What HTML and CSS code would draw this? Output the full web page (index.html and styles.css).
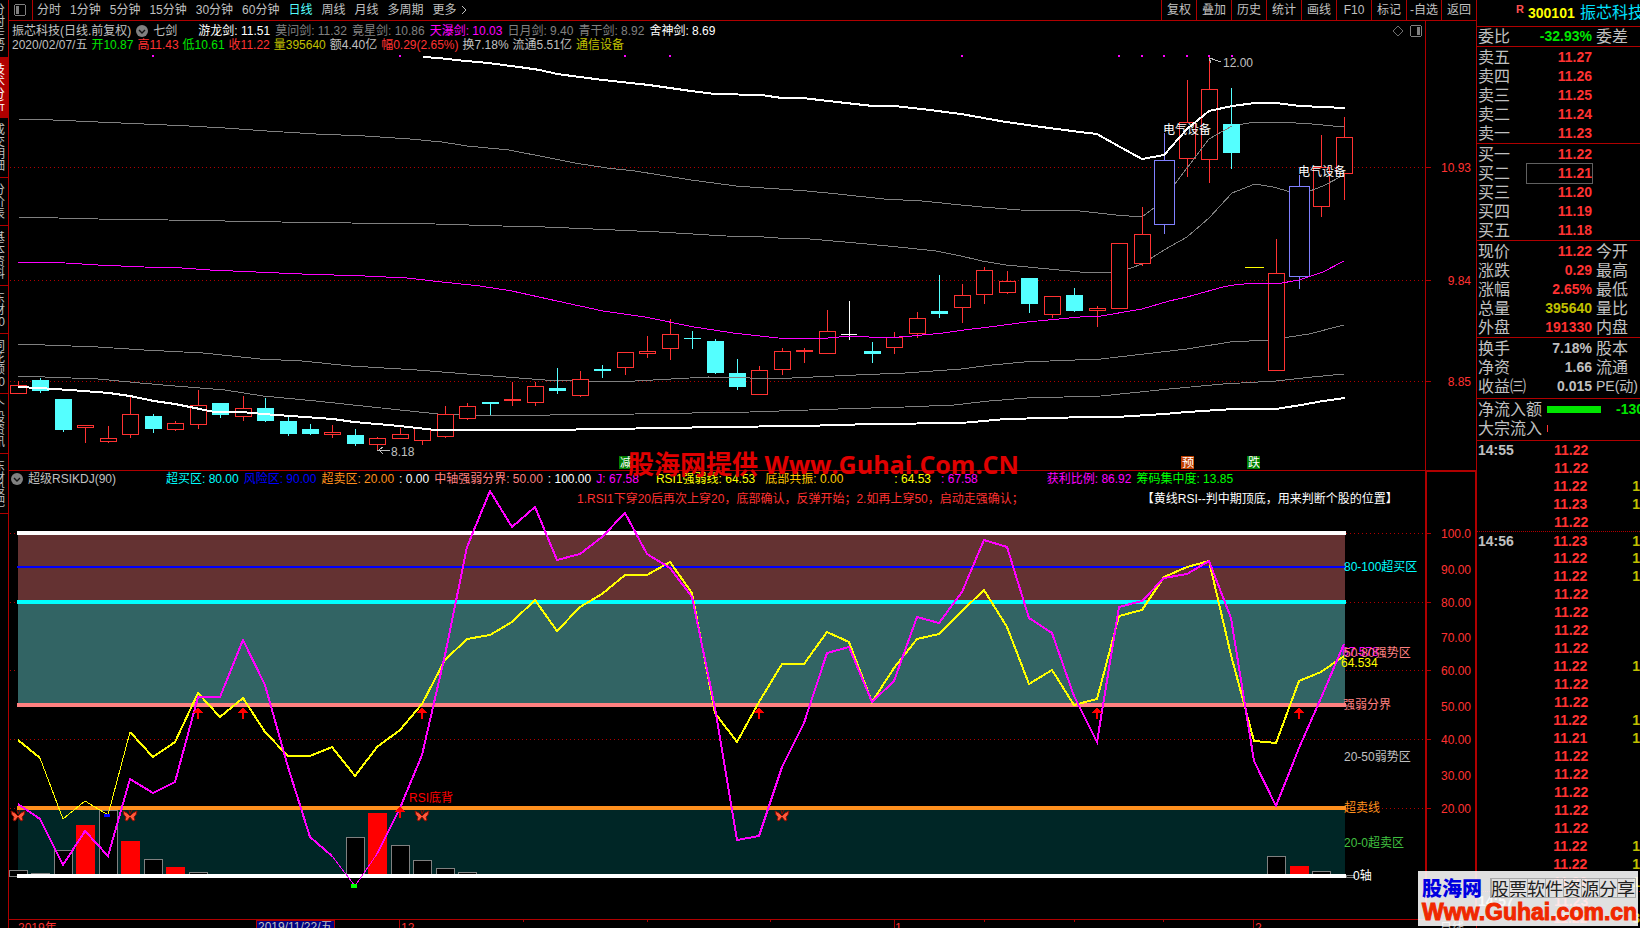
FILE: index.html
```html
<!DOCTYPE html>
<html lang="zh-CN">
<head>
<meta charset="utf-8">
<title>振芯科技 300101</title>
<link rel="stylesheet" href="styles.css">
</head>
<body>
<nav class="side">
  <button class="tab first">分时走势</button>
  <button class="tab active">技术分析</button>
  <button class="tab">成交明细</button>
  <button class="tab">分价表</button>
  <button class="tab">基本资料</button>
  <button class="tab">东财10</button>
  <button class="tab">同花顺10</button>
  <button class="tab">个股资讯</button>
  <button class="tab">东财股吧</button>
</nav>

<main class="main">
  <header class="toolbar">
    <button class="toggle" aria-label="侧栏">
      <svg width="12" height="12" viewBox="0 0 12 12" class="crisp"><rect x="0.5" y="0.5" width="11" height="11" rx="2" fill="none" stroke="#808080"/><rect x="2" y="2" width="3" height="8" fill="#808080"/></svg>
    </button>
    <div class="periods">
      <button>分时</button><button>1分钟</button><button>5分钟</button><button>15分钟</button><button>30分钟</button><button>60分钟</button><button class="on">日线</button><button>周线</button><button>月线</button><button>多周期</button><button class="more">更多<svg width="6" height="10" viewBox="0 0 6 10"><path d="M1 1l4 4-4 4" fill="none" stroke="#c0c0c0"/></svg></button>
    </div>
    <div class="tools">
      <button>复权</button><button>叠加</button><button>历史</button><button>统计</button><button>画线</button><button>F10</button><button>标记</button><button>-自选</button><button>返回</button>
    </div>
  </header>

  <section class="pane">
    <svg id="price" class="plot" viewBox="9 21 1467 449"></svg>
    <div class="info">
      <div class="row gap5">
        <span>振芯科技(日线.前复权)</span>
        <svg class="drop" width="12" height="12" viewBox="0 0 12 12"><circle cx="6" cy="6" r="6" fill="#808080"/><path d="M3 5l3 3 3-3" fill="none" stroke="#111" stroke-width="1.4"/></svg>
        <span>七剑</span>
        <span class="white lead">游龙剑: 11.51</span>
        <span class="dim">莫问剑: 11.32</span>
        <span class="dim">竟星剑: 10.86</span>
        <span class="mag">天瀑剑: 10.03</span>
        <span class="dim">日月剑: 9.40</span>
        <span class="dim">青干剑: 8.92</span>
        <span class="white">舍神剑: 8.69</span>
        <span class="marks">
          <svg width="12" height="12" viewBox="0 0 12 12"><path d="M6 1l5 5-5 5-5-5z" fill="none" stroke="#707070"/></svg>
          <svg width="12" height="12" viewBox="0 0 12 12" class="crisp"><rect x="0.5" y="0.5" width="11" height="11" rx="2" fill="none" stroke="#808080"/><rect x="7" y="2" width="3" height="8" fill="#808080"/></svg>
        </span>
      </div>
      <div class="row gap4">
        <span>2020/02/07/五</span>
        <span class="green">开10.87</span>
        <span class="red">高11.43</span>
        <span class="green">低10.61</span>
        <span class="red">收11.22</span>
        <span class="olive">量395640</span>
        <span>额4.40亿</span>
        <span class="red">幅0.29(2.65%)</span>
        <span>换7.18%</span>
        <span>流通5.51亿</span>
        <span class="olive">通信设备</span>
      </div>
    </div>
  </section>

  <section class="pane lower">
    <svg id="rsi" class="plot" viewBox="9 471 1467 448"></svg>
    <div class="info">
      <div class="row gap5">
        <svg class="drop" width="12" height="12" viewBox="0 0 12 12"><circle cx="6" cy="6" r="6" fill="#808080"/><path d="M3 5l3 3 3-3" fill="none" stroke="#111" stroke-width="1.4"/></svg>
        <span class="name">超级RSIKDJ(90)</span>
        <span class="cyan">超买区: 80.00</span>
        <span class="blue">风险区: 90.00</span>
        <span class="orange">超卖区: 20.00</span>
        <span class="white">: 0.00</span>
        <span class="pink">中轴强弱分界: 50.00</span>
        <span class="white">: 100.00</span>
        <span class="mag">J: 67.58</span>
        <span class="yellow s1">RSI1强弱线: 64.53</span>
        <span class="gold s3">底部共振: 0.00</span>
        <span class="yellow s2">: 64.53</span>
        <span class="mag s3">: 67.58</span>
        <span class="mag s4">获利比例: 86.92</span>
        <span class="lime">筹码集中度: 13.85</span>
      </div>
      <div class="row notes">
        <span class="red">1.RSI1下穿20后再次上穿20，底部确认，反弹开始；2.如再上穿50，启动走强确认；</span>
        <span class="white">【黄线RSI--判中期顶底，用来判断个股的位置】</span>
      </div>
    </div>
  </section>
  <footer class="timeline"><svg id="time" class="plot" viewBox="9 919 1467 20"></svg></footer>
  <div class="banner"><span>股海网提供</span> Www.Guhai.Com.CN</div>
</main>

<aside class="quote">
  <h1 class="stock"><sup>R</sup><b>300101</b><span>振芯科技</span></h1>
  <div id="book"></div>
  <div id="ticks" class="ticks"></div>
</aside>

<div class="brand">
  <div class="brand-top"><b>股海网</b><span>股票软件资源分享</span></div>
  <a class="brand-url" href="#">Www.Guhai.com.cn</a>
</div>
<script src="app.js"></script>
</body>
</html>
```
FILE: styles.css
```css
* { box-sizing: border-box; }
body {
  margin: 0;
  height: 100vh;
  overflow: hidden;
  display: flex;
  background: #000;
  color: #c0c0c0;
  font: 12px/14px "Liberation Sans", "Noto Sans CJK SC", sans-serif;
}
button {
  margin: 0;
  padding: 0;
  border: 0;
  background: none;
  color: inherit;
  font: inherit;
}
.crisp { shape-rendering: crispEdges; }

.side {
  flex: 0 0 9px;
  overflow: hidden;
  border-right: 1px solid #b00000;
  display: flex;
  flex-direction: column;
  align-items: flex-end;
}
.tab {
  width: 24px;
  padding: 6px 3px 5px 7px;
  border-bottom: 1px solid #b00000;
  line-height: 12px;
  text-align: right;
}
.tab.first { padding-top: 4px; }
.tab.active { background: #b00000; color: #fff; }

.main {
  flex: 1;
  min-width: 0;
  position: relative;
  display: flex;
  flex-direction: column;
}
.toolbar {
  flex: 0 0 21px;
  display: flex;
  border-bottom: 1px solid #b00000;
}
.toggle {
  width: 24px;
  padding: 0 0 0 5px;
  border-right: 1px solid #b00000;
  text-align: left;
  line-height: 0;
}
.periods { display: flex; gap: 9px; padding-left: 4px; flex: 1; }
.periods .on { color: #54ffff; }
.more { display: flex; align-items: center; gap: 4px; }
.tools { display: flex; }
.tools button { width: 35px; border-left: 1px solid #b00000; }

.pane { display: grid; }
.pane > * { grid-area: 1 / 1; }
.lower { border-top: 1px solid #b00000; }
.plot { display: block; width: 100%; shape-rendering: crispEdges; }
.info { align-self: start; position: relative; padding-top: 3px; min-width: 0; }
.lower .info { padding-top: 1px; }
.row { display: flex; align-items: center; white-space: nowrap; padding-left: 3px; height: 14px; }
.lower .row { padding-left: 2px; }
.gap5 { gap: 5px; }
.gap4 { gap: 4px; }
.lead { margin-left: 16px; }
.marks { margin-left: auto; padding-right: 54px; display: flex; gap: 6px; }
.name { width: 133px; }
.s1 { margin-left: 12px; }
.s2 { margin-left: 46px; }
.s3 { margin-left: 5px; }
.s4 { margin-left: 64px; }
.lower .notes { margin-top: 6px; padding-left: 568px; gap: 118px; }

.white { color: #fff; }
.dim { color: #808080; }
.red { color: #ff3232; }
.green { color: #00e600; }
.lime { color: #00ff00; }
.olive { color: #c0c000; }
.yellow { color: #ffff00; }
.gold { color: #ffc800; }
.orange { color: #ff901e; }
.pink { color: #ff8080; }
.cyan { color: #00ffff; }
.blue { color: #0000ff; }
.mag { color: #ff00ff; }

.timeline { flex: 1; min-height: 0; overflow: hidden; }
.banner {
  position: absolute;
  left: 619px;
  top: 448px;
  font: bold 25px/32px "Open Sans", "Noto Sans CJK SC", sans-serif;
  color: #e00000;
  white-space: nowrap;
}
.banner span { font-size: 26px; }

.quote {
  flex: 0 0 164px;
  overflow: hidden;
  border-left: 1px solid #b00000;
}
.stock {
  margin: 0;
  height: 27px;
  padding-left: 39px;
  display: flex;
  align-items: center;
  border-bottom: 1px solid #b00000;
  font-weight: normal;
  font-size: 14px;
  white-space: nowrap;
}
.stock > * { flex-shrink: 0; }
.stock sup { color: #ff5050; font: bold 11px/12px "Liberation Sans", sans-serif; align-self: flex-start; padding-top: 3px; width: 12px; }
.stock b { color: #ffff00; width: 52px; }
.stock span { color: #00e0ff; font-size: 16px; }
.group { border-bottom: 1px solid #b00000; width: 100%; border-spacing: 0; table-layout: fixed; padding-top: 1px; }
.group:first-child { padding-top: 0; }
.group:last-of-type { padding-bottom: 2px; }
.group td { padding: 0; height: 19px; line-height: 19px; white-space: nowrap; overflow: visible; }
.group .k { width: 50px; padding-left: 1px; font-size: 16px; }
.group .v { width: 65px; text-align: right; font-size: 14px; font-weight: bold; }
.group .k2 { padding-left: 4px; font-size: 16px; }
.group .k2.small { font-size: 14px; }
.group .box { outline: 1px solid #606060; outline-offset: 0; }
.flow { border-bottom: 1px solid #b00000; padding: 1px 0 2px 1px; font-size: 16px; line-height: 19px; }
.flow div { display: flex; align-items: center; white-space: nowrap; }
.flow div > * { flex-shrink: 0; }
.flow i { margin-left: 5px; height: 7px; width: 54px; background: #00e600; }
.flow i.thin { width: 1px; background: #ff3232; }
.flow b { margin-left: 15px; font-size: 14px; color: #00e600; }
.tick { display: flex; height: 18px; line-height: 18px; font-size: 14px; font-weight: bold; }
.tick.new { border-top: 1px dotted #b00000; }
.tick time { width: 77px; padding-left: 1px; }
.tick .p { width: 80px; color: #ff3232; }
.tick .n { color: #c0c000; }

.brand {
  position: absolute;
  right: 2px;
  bottom: 2px;
  width: 220px;
  height: 55px;
  padding: 4px 3px 0 4px;
  background: rgba(255, 255, 255, 0.88);
}
.brand-top { display: flex; justify-content: space-between; align-items: center; height: 25px; white-space: nowrap; }
.brand-top b { color: #0000e0; font: 900 20px/24px "Noto Sans CJK SC", sans-serif; }
.brand-top span {
  color: #202020;
  font: 18px/18px "Noto Sans CJK SC", sans-serif;
  background: repeating-linear-gradient(90deg, #aaa 0 1px, transparent 1px 18px);
  outline: 1px solid #aaa;
}
.brand-url {
  display: block;
  color: #f02800;
  font: bold 23px/24px "Liberation Sans", sans-serif;
  -webkit-text-stroke: 1px #f02800;
  text-decoration: none;
}
```
FILE: app.js
```js
const NS = 'http://www.w3.org/2000/svg';
const X = i => Math.floor(18.3 + 22.475 * i);

function add(svg, tag, attrs, text) {
  const el = document.createElementNS(NS, tag);
  for (const k in attrs) el.setAttribute(k, attrs[k]);
  if (text) el.textContent = text;
  svg.appendChild(el);
}
const line = (s, x1, y1, x2, y2, c, w = 1, dash) =>
  add(s, 'line', { x1, y1, x2, y2, stroke: c, 'stroke-width': w, ...(dash ? { 'stroke-dasharray': dash } : {}) });
const rect = (s, x, y, width, height, fill, stroke) =>
  add(s, 'rect', { x, y, width, height, fill, ...(stroke ? { stroke } : {}) });
const label = (s, x, y, t, fill, size = 12, anchor = 'start') =>
  add(s, 'text', { x, y: y + 4, fill, 'font-size': size, 'text-anchor': anchor }, t);
const poly = (s, pts, c, w = 1) =>
  add(s, 'polyline', { points: pts.join(' '), fill: 'none', stroke: c, 'stroke-width': w });

/* price chart */
const price = document.getElementById('price');
for (const [y, t] of [[167.5, '10.93'], [280.5, '9.84'], [381.5, '8.85']]) {
  line(price, 10, y, 1425, y, '#b00000', 1, '1 3');
  line(price, 1425, y, 1431, y, '#b00000');
  label(price, 1471, y, t, '#ff3232', 12, 'end');
}
line(price, 1425.5, 21, 1425.5, 470, '#b00000');

// [open/close top, bottom, high, low, kind]
const candles = [
  [385, 393, 381, 393, 'r'], [380, 391, 378, 393, 'c'], [399, 430, 399, 432, 'c'], [425, 427, 425, 443, 'r'],
  [438, 441, 426, 443, 'r'], [414, 434, 397, 438, 'r'], [416, 429, 414, 433, 'c'], [423, 429, 421, 431, 'r'],
  [405, 424, 390, 429, 'r'], [403, 415, 403, 418, 'c'], [408, 416, 396, 421, 'r'], [408, 421, 398, 422, 'c'],
  [421, 434, 417, 436, 'c'], [429, 434, 424, 435, 'c'], [432, 434, 425, 438, 'r'], [435, 444, 429, 446, 'c'],
  [438, 444, 437, 450, 'r'], [434, 438, 428, 439, 'r'], [428, 440, 428, 445, 'r'], [414, 436, 406, 438, 'r'],
  [406, 418, 403, 420, 'r'], [402, 404, 402, 415, 'c'], [399, 400, 382, 406, 'r'], [386, 402, 382, 406, 'r'],
  [388, 391, 368, 394, 'c'], [379, 395, 371, 397, 'r'], [369, 371, 365, 378, 'c'], [352, 367, 352, 375, 'r'],
  [351, 353, 336, 358, 'r'], [334, 348, 319, 360, 'r'], [338, 339, 331, 349, 'c'], [341, 373, 339, 374, 'c'],
  [373, 387, 359, 390, 'c'], [370, 394, 366, 394, 'r'], [351, 369, 348, 375, 'r'], [350, 351, 348, 363, 'r'],
  [331, 353, 310, 353, 'r'], [334, 335, 301, 340, 'w'], [351, 354, 342, 363, 'c'], [337, 347, 332, 354, 'r'],
  [318, 333, 312, 338, 'r'], [311, 314, 275, 318, 'c'], [295, 307, 284, 323, 'r'], [270, 294, 267, 304, 'r'],
  [281, 292, 271, 294, 'r'], [278, 304, 278, 313, 'c'], [296, 314, 296, 318, 'r'], [295, 311, 288, 312, 'c'],
  [308, 310, 306, 327, 'r'], [243, 308, 243, 308, 'r'], [234, 263, 207, 266, 'r'], [160, 224, 133, 234, 'b'],
  [122, 158, 80, 177, 'r'], [89, 159, 56, 183, 'r'], [124, 153, 88, 169, 'c'], [267, 268, 267, 268, 'y'],
  [273, 370, 239, 370, 'r'], [186, 276, 175, 289, 'b'], [167, 206, 135, 217, 'r'], [137, 173, 117, 200, 'r']
];
const ink = { r: '#ff3232', c: '#54ffff', b: '#8080ff', w: '#ffffff', y: '#ffff00' };
const curves = [
  ['#808080', 1, '18,119 53,120 98,122 144,124 189,126 225,128 267,131 316,134 365,136 410,139 442,142 467,146 509,150 550,158 575,163 607,168 635,171 691,180 736,186 807,191 838,194 884,199 922,201 961,205 982,207 1020,210 1080,211 1116,215 1142,217 1154,208 1175,184 1187,168 1209,139 1232,126 1255,122 1280,122 1312,124 1344,127'],
  ['#808080', 1, '18,217 98,219 168,220 281,222 351,223 435,224 502,226 545,227 593,229 659,232 726,236 764,237 778,238 810,239 856,243 898,247 936,251 961,256 982,261 1006,265 1049,269 1080,272 1101,273 1120,272 1142,264 1164,250 1187,237 1209,218 1232,193 1255,184 1273,187 1291,192 1310,191 1323,186 1344,175'],
  ['#808080', 1, '18,344 98,347 144,350 203,353 260,359 302,361 351,366 417,370 467,374 545,380 575,381 603,382 635,381 708,377 750,378 792,378 856,375 905,373 961,369 992,365 1024,362 1101,359 1187,349 1230,342 1269,340 1309,334 1344,325'],
  ['#808080', 1, '18,376 98,379 140,383 175,386 225,390 263,396 316,401 372,407 438,414 460,415 550,415 635,414 750,412 838,409 905,407 954,405 989,401 1027,398 1101,396 1169,389 1223,384 1276,381 1312,377 1344,374'],
  ['#ff00ff', 1, '18,262 49,262 98,265 144,267 182,268 210,270 256,272 302,274 365,276 407,278 442,282 480,286 512,291 557,301 603,311 645,317 694,327 733,333 778,338 817,339 850,336 887,338 912,336 943,333 964,330 989,327 1027,322 1080,317 1101,316 1142,309 1169,301 1187,297 1223,287 1234,285 1255,283 1276,284 1299,280 1323,272 1344,261'],
  ['#ffffff', 2, '423,57 438,58 456,60 488,63 519,67 540,70 557,74 603,80 649,85 691,91 715,94 761,95 782,98 803,98 828,101 873,106 894,106 922,109 961,114 1006,122 1049,128 1080,132 1097,134 1120,147 1142,159 1164,155 1187,129 1209,111 1232,106 1255,103 1276,103 1300,106 1323,107 1345,108'],
  ['#ffffff', 2, '18,387 39,388 84,391 109,393 130,396 154,401 175,404 200,409 214,412 242,412 263,414 291,416 333,419 354,422 400,426 435,430 550,430 603,429 670,428 715,427 803,426 873,424 961,423 1006,419 1090,417 1116,417 1164,414 1187,412 1234,409 1276,409 1301,405 1323,401 1345,398']
];
for (const [c, w, pts] of curves.slice(0, 5)) poly(price, pts.split(' '), c, w);
candles.forEach(([t, b, h, l, k], i) => {
  const x = X(i), c = ink[k];
  if (k === 'y') return rect(price, x - 9, t, 19, 1, c);
  if (k === 'w') { rect(price, x - 8, t, 16, 1, c); return rect(price, x, h, 1, l - h, c); }
  rect(price, x, h, 1, l - h, c);
  if (k === 'c') rect(price, x - 8, t, 17, b - t, c);
  else {
    const half = k === 'b' ? 10 : 8;
    rect(price, x - half + 0.5, t + 0.5, half * 2, b - t, '#000', c);
  }
});
// averages stay visible inside hollow bodies, except the framed ones
for (const [c, w, pts] of curves) {
  if (c !== '#808080') poly(price, pts.split(' '), c, w);
}
poly(price, ['1187,168', '1209,139', '1232,126'], '#808080');
poly(price, ['1187,237', '1209,218', '1232,193'], '#808080');
poly(price, ['1310,191', '1323,186', '1344,175'], '#808080');
poly(price, ['705,377', '750,378', '792,378'], '#808080');

for (const x of [152, 399, 624, 669, 961, 1118, 1141, 1163, 1186, 1208, 1231]) rect(price, x, 55, 2, 2, '#ff00ff');
poly(price, ['1221,62', '1209,58', '1213,58'], '#c0c0c0');
poly(price, ['1209,58', '1211,63'], '#c0c0c0');
label(price, 1223, 63, '12.00', '#c0c0c0');
poly(price, ['390,450', '379,450', '383,447'], '#c0c0c0');
poly(price, ['379,450', '383,454'], '#c0c0c0');
label(price, 391, 452, '8.18', '#c0c0c0');
label(price, 1163, 130, '电气设备', '#fff');
label(price, 1298, 172, '电气设备', '#fff');
for (const [x, t, c] of [[619, '减', '#008000'], [1181, '预', '#c04000'], [1247, '跌', '#008000']]) {
  rect(price, x, 456, 13, 13, c);
  label(price, x + 1, 463, t, '#fff');
}

/* oscillator */
const rsi = document.getElementById('rsi');
for (const y of [533.5, 602.5, 670.5, 739.5, 808.5]) {
  line(rsi, 10, y, 1425, y, '#b00000', 1, '1 3');
  line(rsi, 1425, y, 1431, y, '#b00000');
}
rect(rsi, 18, 533, 1327, 69, '#643232');
rect(rsi, 18, 602, 1327, 103, '#326464');
rect(rsi, 18, 808, 1327, 68, '#002626');
const bars = { 0: 870, 1: 873, 2: 850, 3: '825', 4: 810, 5: '841', 6: 859, 7: '867', 8: 872, 15: 837, 16: '813', 17: 845, 18: 860, 19: 868, 20: 872, 56: 856, 57: '866', 58: 871 };
for (const i in bars) {
  const y = bars[i], x = X(+i);
  if (typeof y === 'string') rect(rsi, x - 9, +y, 19, 876 - y, '#ff0000');
  else rect(rsi, x - 8.5, y + 0.5, 18, 876 - y, '#000', '#808080');
}
for (const [y, c, w] of [[533, '#ffffff', 4], [567, '#0000ff', 2], [602, '#00ffff', 4], [705, '#ff8080', 4], [808, '#ff901e', 4], [876, '#ffffff', 4]])
  line(rsi, 17, y, 1346, y, c, w);
rect(rsi, 1346, 875, 8, 2, '#000', '#808080');

const slow = [740, 758, 819, 801, 815, 732, 757, 742, 693, 717, 698, 732, 756, 756, 747, 776, 747, 730, 704, 660, 639, 635, 622, 600, 631, 607, 594, 575, 575, 562, 593, 713, 742, 702, 664, 664, 632, 642, 702, 668, 639, 634, 611, 590, 627, 684, 670, 705, 699, 616, 610, 577, 567, 561, 655, 741, 743, 681, 672, 656];
const fast = [804, 819, 865, 831, 856, 779, 793, 782, 697, 697, 640, 685, 767, 837, 856, 886, 854, 808, 755, 655, 547, 491, 527, 507, 560, 554, 537, 513, 554, 568, 597, 708, 840, 836, 767, 723, 653, 647, 702, 681, 617, 623, 592, 540, 547, 618, 633, 696, 742, 607, 601, 578, 574, 561, 618, 761, 806, 748, 698, 644];
const span = (d, a, b) => d.slice(a, b + 1).map((y, k) => X(a + k) + ',' + y);
poly(rsi, span(slow, 0, 1), '#ffff00', 2);
poly(rsi, span(slow, 1, 5), '#ffff00', 1);
poly(rsi, span(slow, 5, 59), '#ffff00', 2);
poly(rsi, span(fast, 0, 14), '#ff00ff', 2);
poly(rsi, span(fast, 14, 16), '#ff00ff', 1);
poly(rsi, span(fast, 16, 59), '#ff00ff', 2);
rect(rsi, 104, 814, 6, 3, '#0000ff');
rect(rsi, 351, 884, 6, 4, '#00ff00');

const arrow = (x, y) => add(rsi, 'path', { d: `M${x} ${y}l5 6h-4v6h-2v-6h-4z`, fill: '#ff0000' });
for (const i of [8, 10, 18, 33, 48, 57]) arrow(X(i), 707);
arrow(X(17), 806);
for (const i of [0, 5, 18, 34])
  add(rsi, 'path', {
    d: 'M0 0L-3-3L-7-5L-6-1L-4 1L-5 4L-3 5L0 1L3 5L5 4L4 1L6-1L7-5L3-3ZM0-2L-1-6M0-2L2-6',
    fill: '#ff5a3c', stroke: '#8c0c00', 'shape-rendering': 'auto', transform: `translate(${X(i)} 816)`
  });
label(rsi, 409, 798, 'RSI底背', '#ff0000');

label(rsi, 1344, 567, '80-100超买区', '#00ffff');
label(rsi, 1342, 652, '67.578', '#ff00ff');
label(rsi, 1344, 653, '50-80强势区', '#ff8080');
label(rsi, 1341, 663, '64.534', '#ffff00');
label(rsi, 1343, 705, '强弱分界', '#ff8080');
label(rsi, 1344, 757, '20-50弱势区', '#c0c0c0');
label(rsi, 1344, 808, '超卖线', '#ff901e');
label(rsi, 1344, 843, '20-0超卖区', '#40c040');
label(rsi, 1353, 876, '0轴', '#fff');
for (const [y, t] of [[534, '100.0'], [570, '90.00'], [603, '80.00'], [638, '70.00'], [671, '60.00'], [707, '50.00'], [740, '40.00'], [776, '30.00'], [809, '20.00']])
  label(rsi, 1471, y, t, '#ff3232', 12, 'end');
rect(rsi, 1425, 471, 2, 448, '#b00000');
rect(rsi, 1425, 471, 51, 1, '#b00000');
rect(rsi, 1475, 471, 1, 448, '#b00000');

/* time axis */
const time = document.getElementById('time');
rect(time, 9, 919, 1467, 1, '#b00000');
rect(time, 256, 920, 78, 19, '#000080', '#b00000');
for (const x of [399, 894, 1253]) rect(time, x, 919, 1, 10, '#b00000');
for (const x of [523, 647, 770, 984, 1074, 1163]) rect(time, x, 919, 1, 3, '#b00000');
label(time, 18, 928, '2019年', '#ff3232');
label(time, 258, 927, '2019/11/22/五', '#c0c0c0');
label(time, 401, 928, '12', '#ff3232');
label(time, 895, 928, '1', '#ff3232');
label(time, 1255, 928, '2', '#ff3232');
label(time, 1440, 928, '日线', '#c0c0c0');

/* quote panel */
const groups = [
  [['委比', '-32.93%', 'green', '委差']],
  [['卖五', '11.27', 'red'], ['卖四', '11.26', 'red'], ['卖三', '11.25', 'red'], ['卖二', '11.24', 'red'], ['卖一', '11.23', 'red']],
  [['买一', '11.22', 'red'], ['买二', '11.21', 'red box'], ['买三', '11.20', 'red'], ['买四', '11.19', 'red'], ['买五', '11.18', 'red']],
  [['现价', '11.22', 'red', '今开'], ['涨跌', '0.29', 'red', '最高'], ['涨幅', '2.65%', 'red', '最低'], ['总量', '395640', 'olive', '量比'], ['外盘', '191330', 'red', '内盘']],
  [['换手', '7.18%', '', '股本'], ['净资', '1.66', '', '流通'], ['收益㈢', '0.015', '', 'PE(动)']]
];
document.getElementById('book').innerHTML = groups.map(g =>
  '<table class="group">' + g.map(([k, v, c, k2 = '']) =>
    `<tr><td class="k">${k}</td><td class="v ${c}">${v}</td><td class="k2${k2.length > 3 ? ' small' : ''}">${k2}</td></tr>`).join('') + '</table>').join('') +
  '<div class="flow"><div>净流入额<i></i><b>-130</b></div><div>大宗流入<i class="thin"></i></div></div>';

const prices = { 3: '11.23', 5: '11.23', 16: '11.21', 25: '11.23' };
const stamps = { 0: '14:55', 5: '14:56', 25: '14:57' };
const lots = { 2: 1, 3: 1, 5: 1, 6: 1, 7: 1, 12: 1, 15: 1, 16: 1, 22: 1, 23: 1, 24: 1, 26: 3 };
document.getElementById('ticks').innerHTML = Array.from({ length: 27 }, (_, i) =>
  `<div class="tick${i && stamps[i] ? ' new' : ''}"><time>${stamps[i] || ''}</time><span class="p">${prices[i] || '11.22'}</span><span class="n">${lots[i] || ''}</span></div>`).join('');
```
